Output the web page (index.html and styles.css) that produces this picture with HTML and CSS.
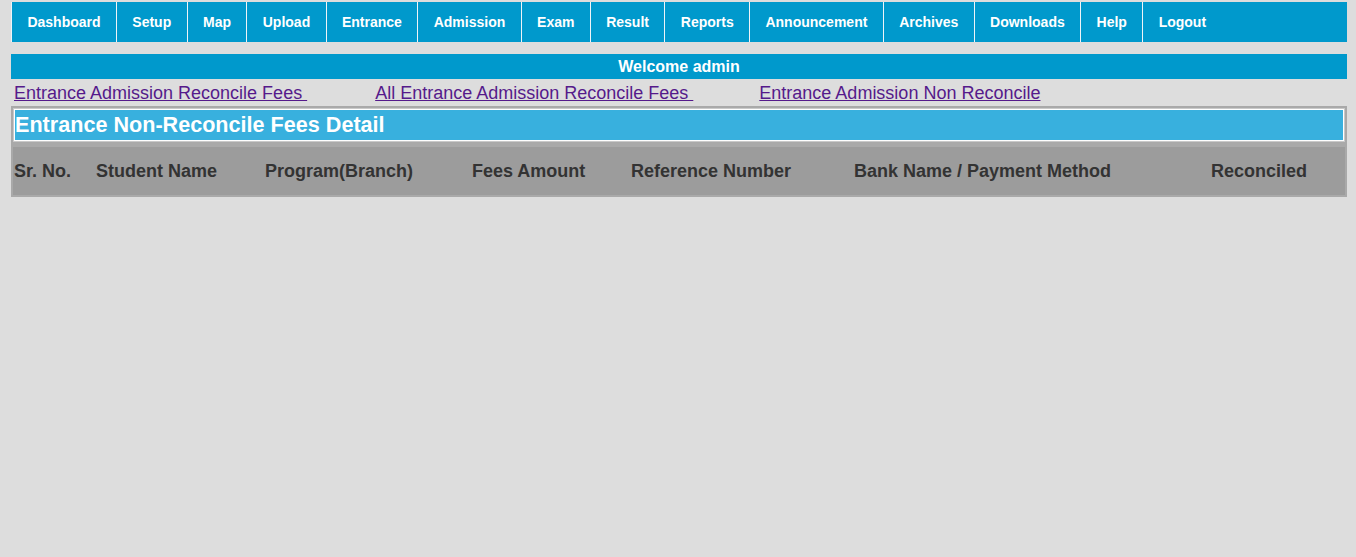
FILE: index.html
```html
<!DOCTYPE html>
<html>
<head>
<meta charset="utf-8">
<title>Entrance Non-Reconcile Fees Detail</title>
<link rel="stylesheet" href="styles.css">
</head>
<body>
<div class="page">
  <ul class="nav">
    <li><a href="#">Dashboard</a></li>
    <li><a href="#">Setup</a></li>
    <li><a href="#">Map</a></li>
    <li><a href="#">Upload</a></li>
    <li><a href="#">Entrance</a></li>
    <li><a href="#">Admission</a></li>
    <li><a href="#">Exam</a></li>
    <li><a href="#">Result</a></li>
    <li><a href="#">Reports</a></li>
    <li><a href="#">Announcement</a></li>
    <li><a href="#">Archives</a></li>
    <li><a href="#">Downloads</a></li>
    <li><a href="#">Help</a></li>
    <li><a href="#">Logout</a></li>
  </ul>
  <div class="welcome">Welcome admin</div>
  <div class="links">
    <a class="link link-1" href="#">Entrance Admission Reconcile Fees&nbsp;</a>
    <a class="link link-2" href="#">All Entrance Admission Reconcile Fees&nbsp;</a>
    <a class="link" href="#">Entrance Admission Non Reconcile</a>
  </div>
  <div class="grid-box">
    <div class="title-wrap">
      <div class="title">Entrance Non-Reconcile Fees Detail</div>
    </div>
    <div class="spacer"></div>
    <div class="head-row">
      <div>Sr. No.</div>
      <div>Student Name</div>
      <div>Program(Branch)</div>
      <div>Fees Amount</div>
      <div>Reference Number</div>
      <div>Bank Name / Payment Method</div>
      <div>Reconciled</div>
    </div>
  </div>
</div>
</body>
</html>
```

FILE: styles.css
```css
html, body {
  margin: 0;
  padding: 0;
  background: #dddddd;
  font-family: "Liberation Sans", Arial, sans-serif;
}

.page {
  width: 1336px;
  margin-left: 11px;
  padding-top: 2px;
}

.nav {
  list-style: none;
  margin: 0;
  padding: 0;
  display: flex;
  height: 40px;
  background: #0099cc;
}

.nav li {
  border-left: 1px solid #eef4f8;
  display: flex;
}

.nav a {
  display: flex;
  align-items: center;
  padding: 0 15.4px;
  color: #ffffff;
  font-weight: bold;
  font-size: 14px;
  text-decoration: none;
}

.welcome {
  margin-top: 12px;
  height: 25px;
  line-height: 25px;
  background: #0099cc;
  color: #ffffff;
  font-weight: bold;
  font-size: 16px;
  text-align: center;
}

.links {
  display: flex;
  height: 21px;
  padding: 4px 0 2px 3px;
}

.link {
  color: #551a8b;
  font-size: 18px;
  line-height: 21px;
  white-space: nowrap;
}

.link-1 {
  margin-right: 68px;
}

.link-2 {
  margin-right: 66px;
}

.grid-box {
  border: 2px solid #a9a9a9;
  background: #a9a9a9;
}

.title-wrap {
  background: #c9c9c9;
  padding: 1px;
}

.title {
  border: 1px solid #ffffff;
  background: #38b0de;
  color: #ffffff;
  font-weight: bold;
  font-size: 21.6px;
  height: 30px;
  line-height: 30px;
  padding-left: 0;
  white-space: nowrap;
}

.spacer {
  height: 5px;
}

.head-row {
  display: grid;
  grid-template-columns: 82px 169px 207px 159px 223px 357px 1fr;
  height: 48px;
  align-items: center;
  background: #9c9c9c;
  color: #333333;
  font-weight: bold;
  font-size: 18px;
  padding-left: 1px;
  box-sizing: border-box;
}

.head-row div {
  white-space: nowrap;
}
```
